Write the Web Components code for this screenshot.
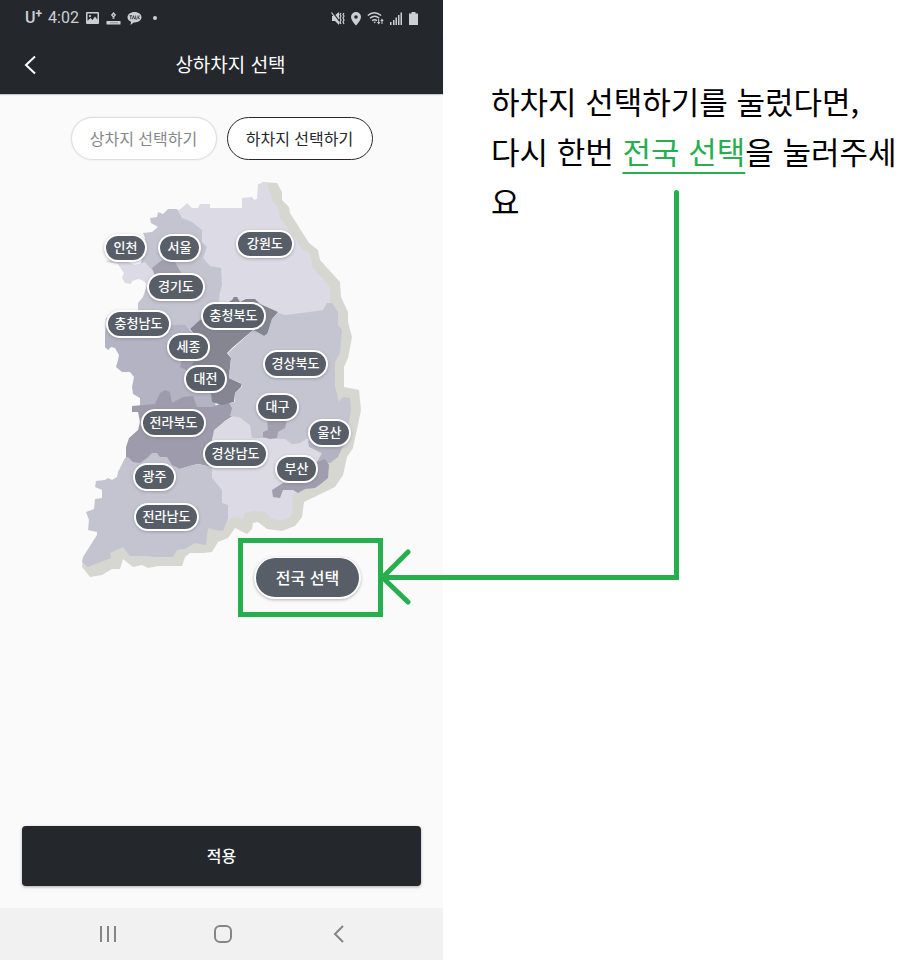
<!DOCTYPE html>
<html lang="ko">
<head>
<meta charset="utf-8">
<title>상하차지 선택</title>
<style>
  body {
    margin: 0;
    background: #fff;
    font-family: "Noto Sans CJK KR", "Noto Sans", sans-serif;
  }
</style>
</head>
<body>
<guide-page></guide-page>

<script>
const define = (name, html, setup) => {
  const template = document.createElement('template');
  template.innerHTML = html;
  customElements.define(name, class extends HTMLElement {
    constructor() {
      super();
      this.attachShadow({ mode: 'open' }).append(template.content.cloneNode(true));
    }
    connectedCallback() { if (setup) setup(this); }
  });
};

define('status-bar', `
<style>
  :host { display: flex; align-items: center; height: 36px; padding: 0 24px 0 25px; background: #24272c; color: #cdd0d2; }
  svg { display: block; fill: currentColor; }
  .group { display: flex; align-items: center; }
  .right { margin-left: auto; gap: 5px; }
  .left { gap: 6px; font-family: Roboto, sans-serif; font-size: 16px; line-height: 20px; }
  .carrier { display: flex; font-weight: 500; }
  .carrier sup { font-size: 12px; line-height: 12px; font-weight: 700; }
  .dot { width: 4px; height: 4px; border-radius: 50%; background: currentColor; margin-left: 5px; }
</style>
<div class="group left">
  <span class="carrier">U<sup>+</sup></span>
  <time>4:02</time>
  <svg width="15" height="14" viewBox="0 0 15 14"><path fill-rule="evenodd" d="M2 1h11q1 0 1 1v10q0 1-1 1H2q-1 0-1-1V2q0-1 1-1zm.5 1.5v7.2l3-2.7 2 2 2.500-3.500 2.500 3.200V2.500zM5 4a1.100 1.100 0 1 1 0 2.200A1.100 1.100 0 0 1 5 4z"/></svg>
  <svg width="15" height="14" viewBox="0 0 15 14"><path fill="none" stroke="currentColor" stroke-width="1.300" d="M7.500 2l1.700 2-1.700 2-1.700-2z"/><path d="M6.500 6.500h2v1.200h-2zM.5 10h14v3.500H.5z"/><path fill="#8c9093" d="M4 11.300h8v1H4z"/></svg>
  <svg width="15" height="15" viewBox="0 0 14 15"><path d="M7 1c3.900 0 7 2.300 7 5.200s-3.100 5.200-7 5.200h-.8L3 14l.6-3.300C1.400 9.800 0 8.200 0 6.200 0 3.300 3.100 1 7 1z"/><path fill="none" stroke="#24272c" stroke-width=".8" d="M2 4.700h2.600M3.300 4.700v3.500M4.900 8.200L6 4.700l1.100 3.500M8.200 4.500v3.600h1.300M10.500 4.500v3.700M12.400 4.700l-1.700 1.600 1.700 1.900"/></svg>
  <span class="dot"></span>
</div>
<div class="group right">
  <svg width="14" height="15" viewBox="0 0 14 15"><path d="M1 5h2l5-4v13l-4-4H1z"/><path fill="none" stroke="#24272c" stroke-width="1.200" d="M1.500 .8l8 11"/><path fill="none" stroke="currentColor" stroke-width="1.200" d="M.5 1.500l8 11"/><path fill="none" stroke="currentColor" stroke-width="1.200" d="M10 2l-1 1.500 1 1.500-1 2 1 2-1 2 1 2M13 2l-1 1.500 1 1.500-1 2 1 2-1 2 1 2"/></svg>
  <svg width="12" height="15" viewBox="0 0 12 15"><path fill-rule="evenodd" d="M6 1a5 5 0 0 1 5 5c0 3.500-5 8.500-5 8.500S1 9.500 1 6a5 5 0 0 1 5-5zm0 3.200a1.800 1.800 0 1 0 0 3.600 1.800 1.800 0 0 0 0-3.600z"/></svg>
  <svg width="17" height="15" viewBox="0 0 17 15"><path fill="none" stroke="currentColor" stroke-width="1.500" d="M.8 4.500q6.200-5.500 13.400 0M3 7.200q4.600-4 9.200 0M5.200 9.700q2.400-2 4.800 0"/><path d="M6.500 10.800h2.500L7.700 12.500zM10 11h1.200V8h1v3h1.200l-1.700 2.500zM13.200 10L15 7.500l1.700 2.500h-1.200v3h-1v-3z"/></svg>
  <svg width="14" height="15" viewBox="0 0 14 15"><path d="M1 11h1.500v3H1zM4 9h1.500v5H4zM6.500 6.500H8V14H6.500zM9 4h1.500v10H9zM11.500 1.500H13V14h-1.500z"/></svg>
  <svg width="11" height="15" viewBox="0 0 11 15"><path d="M3.500 1h4v1.500H10V14H1V2.500h2.500z"/></svg>
</div>`);

define('app-header', `
<style>
  :host { display: grid; grid-template-columns: 60px 1fr 42px; align-items: center; height: 58px; background: #24272c; color: #fff; box-shadow: 0 1px 1px #c8c8cc; }
  button { appearance: none; border: 0; padding: 0; background: none; color: inherit; height: 58px; display: grid; place-items: center; cursor: pointer; }
  svg { display: block; }
  h1 { margin: 0; padding-bottom: 2px; font-size: 19px; line-height: 28px; font-weight: 400; text-align: center; }
</style>
<button type="button" aria-label="뒤로"><svg width="12" height="20" viewBox="0 0 12 20" fill="none" stroke="currentColor" stroke-width="2"><path d="M11 1.500L2 10l9 8.500"/></svg></button>
<h1><slot></slot></h1>`);

define('pill-tab', `
<style>
  :host { display: block; }
  button { appearance: none; box-sizing: border-box; height: 43px; width: 146px; padding: 0 0 2px; border: 1px solid #dedee0; border-radius: 22px; background: #fff; color: #85878b; font: inherit; font-size: 16px; line-height: 24px; box-shadow: 0 0 2px #e2e2e4; cursor: pointer; white-space: nowrap; }
  :host([selected]) button { border-color: #24272c; color: #24272c; box-shadow: none; }
</style>
<button type="button"><slot></slot></button>`,
host => host.shadowRoot.querySelector('button').setAttribute('aria-pressed', host.hasAttribute('selected')));

define('region-pin', `
<style>
  :host { display: block; position: absolute; }
  button { appearance: none; display: block; box-sizing: border-box; width: 43px; height: 28px; padding: 0 0 2px; border: 2px solid #fff; border-radius: 14px; background: #585e67; color: #fff; font: inherit; font-size: 13px; line-height: 22px; font-weight: 500; box-shadow: 0 1px 3px #77778088; white-space: nowrap; cursor: pointer; }
  :host([chars="3"]) button { width: 58px; }
  :host([chars="4"]) button { width: 65px; }
</style>
<button type="button"><slot></slot></button>`,
host => {
  host.style.left = host.getAttribute('x') + 'px';
  host.style.top = host.getAttribute('y') + 'px';
});

define('highlight-frame', `
<style>
  :host { display: grid; align-items: center; justify-items: start; box-sizing: border-box; width: 145px; height: 79px; padding-left: 11px; border: 5px solid #27ae4f; position: absolute; left: 167px; top: 363px; }
</style>
<slot></slot>`);

define('select-all', `
<style>
  :host { display: block; }
  button { appearance: none; box-sizing: border-box; width: 107px; height: 42px; padding: 0; border: 2px solid #fff; border-top-width: 1px; border-radius: 21px; background: #585e67; color: #fff; font: inherit; font-size: 16px; line-height: 24px; font-weight: 500; box-shadow: 0 1px 3px #77778088; cursor: pointer; white-space: nowrap; }
</style>
<button type="button"><slot></slot></button>`);

define('korea-map', `
<style>
  :host { display: block; position: relative; width: 301px; height: 450px; }
  svg { display: block; }
</style>
<svg width="301" height="450" viewBox="71 175 301 450" role="img" aria-label="지역 지도">
  <path fill="#d6d7d1" d="M262 182L277 183 282 192V200L289 207 290 213 309 243 318 250 320 260 340 282 341 297 348 312V322L352 337 348 358 344 367V387L359 390 361 410 353 448 347 457 343 475 335 487 304 502 302 517 295 526 282 531 267 529 258 522 253 523 252 529 247 534 235 528 228 538 218 542 212 552 203 553 190 553 185 557 182 566H158L148 568 142 565 133 567 123 559 120 569 112 569 102 575 90 577 82 567 83 558 140 520 215 470 270 300z"/>
  <path fill="#dbdae5" d="M176 212L183 207 187 203 192 208H198L200 204H210V208H242V198L252 197 254 200 257 199 258 184 267 182 273 202 278 207 280 218 295 238 301 248 310 253 313 268 330 287V304L323 311 302 316 277 316 205 322 190 280 195 230z"/>
  <path fill="#c4c3d0" d="M158 212L163 214 168 209H177L182 218 192 222 202 230V242L207 247 203 258 210 266 221 268 222 285 220 292 218 310 200 328 180 330 138 318V303L143 297 147 285 140 268 145 238 143 233 152 232 158 227 151 223 150 218 157 217z"/>
  <path fill="#dbdae5" d="M107 261L118 258 135 265 145 262 150 268 155 272 152 280 147 284 142 280 138 279 132 281 131 284 125 283 122 278 124 273 118 264 107 262z"/>
  <path fill="#a2a0af" d="M162 260L152 268 155 276H183L175 262z"/>
  <path fill="#b4b3c4" d="M106 318L138 315 150 325H175L185 325 192 332 203 345 213 375 216 410 140 410V398L133 394 132 387 134 377 130 372H122L116 367 118 360 119 355 115 348 111 347 108 350 105 347V335z"/>
  <path fill="#9e9cac" d="M132 406L155 404 160 393 165 390 170 392 172 403 183 397 193 396 197 407H212L230 400 234 415 225 421 216 430 212 440V467L198 464 190 466 180 469 165 470 140 468 126 458V447L129 438 138 430 140 422 138 412H132zM182 360L180 367 188 371 198 360z"/>
  <path fill="#868592" d="M190 329L200 320 232 300 234 297 237 297 240 302 246 299 255 299 260 304 278 312 272 319 267 335 264 336 253 330 232 348 227 353 231 358 229 378 242 384 241 387 235 393 234 402 222 405 212 402 209 375 192 365 203 345z"/>
  <path fill="#c5c4d1" d="M278 313L285 315 302 313 323 310 327 303H332L338 312V325L342 330 340 353 335 362V387L339 402 343 397 350 398 351 410 348 428 330 440 308 446 292 446 265 441 250 440 248 425 240 417 230 416 232 408 229 403 235 402V393L242 387 241 383 229 378 231 358 228 353 253 330 264 336 268 333 272 319z"/>
  <path fill="#dbdae5" d="M225 421L232 417 240 418 250 425 252 438H265L285 439 292 444 300 443 308 438 316 450 325 458 317 477 293 495 292 502 293 510 290 518 280 521 270 518 265 512 255 511 245 513 243 519 236 517 220 522 212 480V440L214 430z"/>
  <path fill="#a2a0af" d="M267 420H287L285 428 278 432 277 438 270 439 263 437V432L268 430z"/>
  <path fill="#b4b3c4" d="M308 441L322 436 348 428 347 442 342 448 338 457 330 463 317 462 322 453 309 447z"/>
  <path fill="#a09eae" d="M272 490L283 483 302 482 315 477 317 462 325 459 329 465 328 478 322 483 315 488 305 489 298 493 293 490H283L280 498 273 497z"/>
  <path fill="#c4c3d0" d="M125 458L128 457 133 462 140 463 147 458 152 453H157L160 457 167 457 172 465 180 469 190 466 198 464 212 467V478L222 490V503L228 505V518L223 531 215 530 208 528 206 545 195 543 185 549 177 550 173 557H155L147 556 130 556 123 547 110 553 111 558 88 567 82 562 83 557 97 535V532L88 530 89 520 86 512 94 509 95 499 102 498V490L95 487 96 481 105 480 108 478 112 480 117 477 118 472z"/>
</svg>
<slot></slot>`);

define('apply-button', `
<style>
  :host { display: block; margin: auto 22px 22px; }
  button { appearance: none; display: block; width: 100%; height: 60px; padding: 0 0 2px; border: 0; border-radius: 4px; background: #24272c; color: #fff; font: inherit; font-size: 16px; line-height: 24px; font-weight: 500; box-shadow: 0 1px 3px #77778099; cursor: pointer; }
</style>
<button type="button"><slot></slot></button>`);

define('system-nav', `
<style>
  :host { display: grid; grid-template-columns: repeat(3, 1fr); height: 52px; padding: 0 46px 0 50px; background: #f1f1f1; color: #858585; }
  button { appearance: none; display: grid; place-items: center; border: 0; padding: 0; background: none; color: inherit; cursor: pointer; }
  svg { display: block; fill: none; stroke: currentColor; stroke-width: 2; }
</style>
<button type="button" aria-label="최근 앱"><svg width="18" height="18" viewBox="0 0 18 18"><path d="M2 1v16M9 1v16M16 1v16"/></svg></button>
<button type="button" aria-label="홈"><svg width="18" height="18" viewBox="0 0 18 18"><rect x="1" y="1" width="16" height="16" rx="5"/></svg></button>
<button type="button" aria-label="뒤로"><svg width="18" height="18" viewBox="0 0 18 18"><path d="M13 1L5 9l8 8"/></svg></button>`);

define('phone-screen', `
<style>
  :host { display: flex; flex-direction: column; background: #fafafa; }
  .tabs { display: flex; justify-content: center; gap: 10px; padding: 23px 0 15px; }
  korea-map { align-self: center; }
</style>
<status-bar></status-bar>
<app-header>상하차지 선택</app-header>
<div class="tabs">
  <pill-tab>상차지 선택하기</pill-tab>
  <pill-tab selected>하차지 선택하기</pill-tab>
</div>
<korea-map>
  <region-pin x="33" y="59">인천</region-pin>
  <region-pin x="87" y="59">서울</region-pin>
  <region-pin x="165" y="55" chars="3">강원도</region-pin>
  <region-pin x="76" y="98" chars="3">경기도</region-pin>
  <region-pin x="130" y="127" chars="4">충청북도</region-pin>
  <region-pin x="35" y="135" chars="4">충청남도</region-pin>
  <region-pin x="96" y="158">세종</region-pin>
  <region-pin x="192" y="175" chars="4">경상북도</region-pin>
  <region-pin x="113" y="190">대전</region-pin>
  <region-pin x="185" y="218">대구</region-pin>
  <region-pin x="70" y="234" chars="4">전라북도</region-pin>
  <region-pin x="237" y="244">울산</region-pin>
  <region-pin x="132" y="265" chars="4">경상남도</region-pin>
  <region-pin x="204" y="280">부산</region-pin>
  <region-pin x="62" y="288">광주</region-pin>
  <region-pin x="63" y="328" chars="4">전라남도</region-pin>
  <highlight-frame><select-all>전국 선택</select-all></highlight-frame>
</korea-map>
<apply-button>적용</apply-button>
<system-nav></system-nav>`);

define('guide-note', `
<style>
  :host { display: block; position: relative; padding: 76px 0 0 48px; color: #000; }
  p { margin: 0; font-size: 31px; line-height: 50px; }
  em { font-style: normal; color: #27ae4f; text-decoration: underline; text-decoration-thickness: 2px; text-underline-offset: 8px; }
  svg { position: absolute; left: -64px; top: 188px; display: block; fill: none; stroke: #27ae4f; stroke-width: 5; stroke-linecap: round; }
</style>
<p>하차지 선택하기를 눌렀다면,<br>다시 한번 <em>전국 선택</em>을 눌러주세<wbr>요</p>
<svg width="302" height="420" viewBox="379 188 302 420" aria-hidden="true"><path d="M676.500 192.500V577.500H384M408 552L382.500 577.500L408 602"/></svg>`);

define('guide-page', `
<style>
  :host { display: grid; grid-template-columns: 443fr 457fr; min-height: 100vh; }
  guide-note { min-width: 0; }
</style>
<phone-screen></phone-screen>
<guide-note></guide-note>`);
</script>
</body>
</html>
